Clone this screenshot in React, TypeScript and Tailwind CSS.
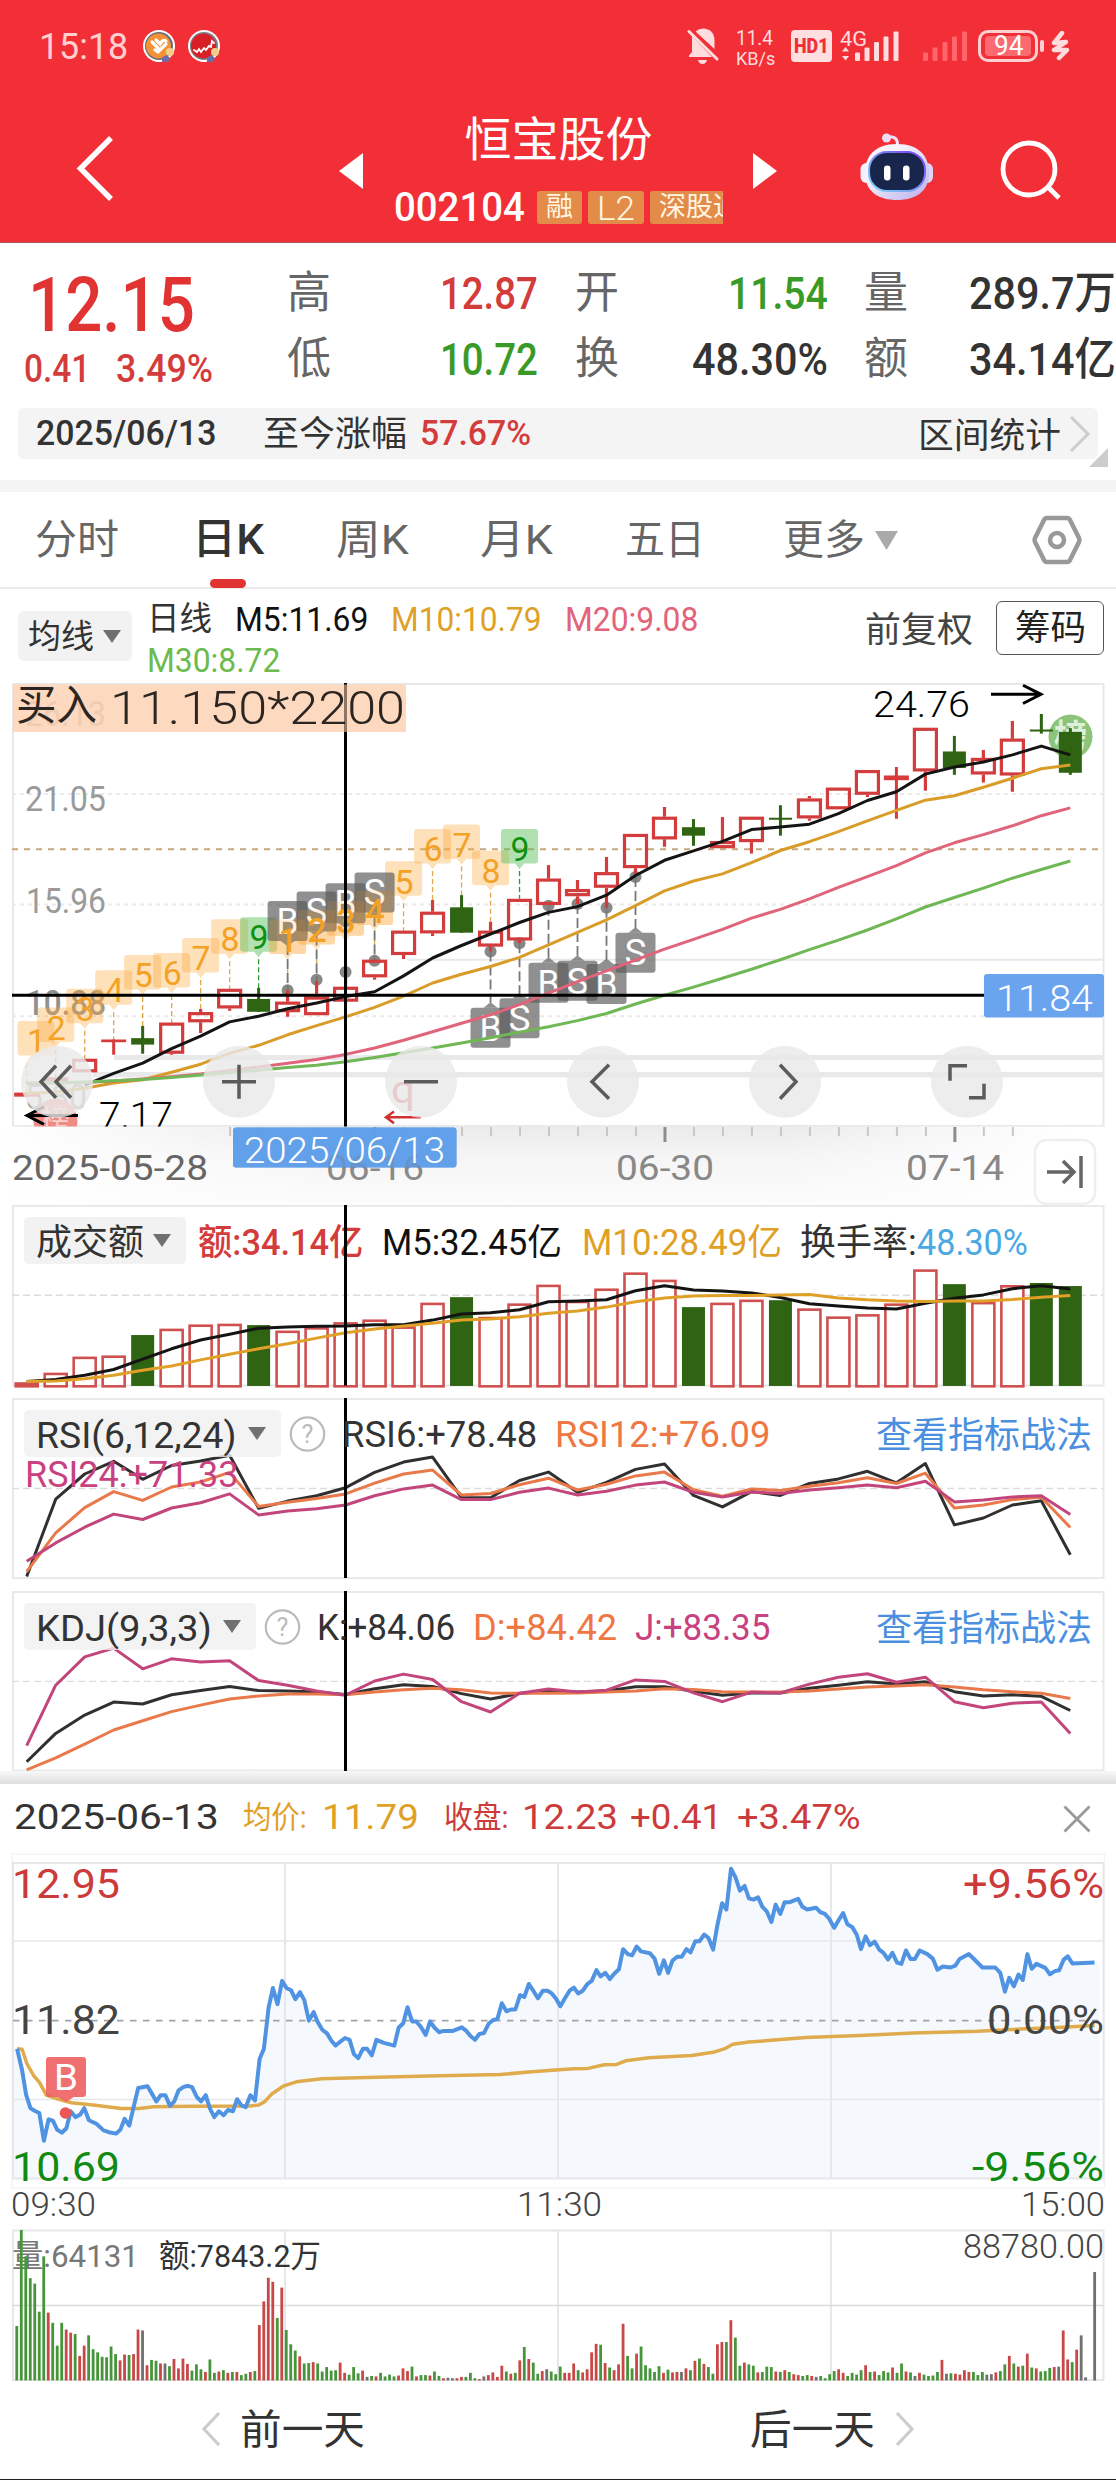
import { useLayoutEffect, useRef, type ReactNode } from "react";

const FONT = 'Roboto, "Noto Sans CJK SC", sans-serif';

/* Horizontally condenses or widens its text to fill the width given by its class. */
function Fit({ className, children }: { className: string; children: ReactNode }) {
  const outer = useRef<HTMLSpanElement>(null);
  const inner = useRef<HTMLSpanElement>(null);
  useLayoutEffect(() => {
    const o = outer.current;
    const n = inner.current;
    if (o && n && n.offsetWidth > 0) n.style.transform = `scaleX(${o.clientWidth / n.offsetWidth})`;
  });
  return (
    <span ref={outer} className={`block shrink-0 whitespace-nowrap leading-none ${className}`}>
      <span ref={inner} className="inline-block origin-left">
        {children}
      </span>
    </span>
  );
}

type LabelProps = {
  x: number;
  cy: number;
  size: number;
  w: number;
  fill: string;
  weight?: number;
  opacity?: number;
  children: string;
};

function Label({ x, cy, size, w, fill, weight = 400, opacity = 1, children }: LabelProps) {
  return (
    <text x={x} y={cy + size * 0.355} fontSize={size} fontWeight={weight} fill={fill} opacity={opacity} textLength={w} lengthAdjust="spacingAndGlyphs" fontFamily={FONT}>
      {children}
    </text>
  );
}

const cx = (i: number) => 26.7 + 28.99 * i;
const poly = (values: number[], y: (v: number) => number, from = 0) =>
  values.map((v, i) => `${cx(i).toFixed(1)},${y(v).toFixed(1)}`).slice(from).join(" ");

/* ---------- status bar and header ---------- */

function StatusBar() {
  return (
    <div className="flex h-[92px] items-center pl-[39px]">
      <Fit className="w-[89px] text-[37px] text-[#ffcfd1]">15:18</Fit>
      <svg width="32" height="32" viewBox="0 0 32 32" className="ml-[15px]">
        <circle cx="16" cy="16" r="16" fill="#fff" />
        <circle cx="16" cy="16" r="14" fill="#666c78" />
        <circle cx="15.5" cy="16" r="12.5" fill="#f29136" />
        <path d="M9 12 L15 18 M13 10 L17 14 Q20 9 23 11 M12 20 L15 22 L23 14" stroke="#fff" strokeWidth="3.2" fill="none" strokeLinecap="round" />
        <circle cx="27" cy="22" r="4" fill="#f1cf8b" />
        <path d="M19 28 q4 -5 8 0 l-2 4 h-6z" fill="#6b6ca8" />
      </svg>
      <svg width="32" height="32" viewBox="0 0 32 32" className="ml-[13px]">
        <circle cx="16" cy="16" r="16" fill="#fff" />
        <circle cx="16" cy="16" r="14" fill="#77808a" />
        <circle cx="15.5" cy="16" r="12.5" fill="#d81f26" />
        <path d="M6 20 l3 2 2 -3 2 3 3 -4 2 2 3 -4 2 1 1 -6 2 2" stroke="#fff" strokeWidth="1.8" fill="none" strokeLinecap="round" />
        <circle cx="27" cy="22" r="4" fill="#f1cf8b" />
        <path d="M19 28 q4 -5 8 0 l-2 4 h-6z" fill="#6b6ca8" />
      </svg>
      <svg width="32" height="38" viewBox="0 0 32 38" className="ml-[467px]" fill="#ffdcdd">
        <path d="M8.500 4.500 Q12 1.500 16 1.500 Q27 2 27.500 13 V22 Z" />
        <path d="M5 9 L25 30 H2 V28.500 L5 25 Z" />
        <path d="M2 4.500 L30 32" stroke="#ffdcdd" strokeWidth="3" strokeLinecap="round" />
        <path d="M11 33 H20 Q19 37 15.500 37 Q12 37 11 33" />
      </svg>
      <div className="ml-[17px] flex h-[36px] w-[40px] flex-col justify-between text-[#ffdcdd]">
        <Fit className="w-[37px] text-[21px] leading-[17px]">11.4</Fit>
        <Fit className="w-[39px] text-[19px] leading-[16px]">KB/s</Fit>
      </div>
      <div className="ml-[15px] flex h-[32px] w-[41px] items-center justify-center rounded-[4px] bg-[#ffdfe0]">
        <Fit className="w-[35px] text-[21px] font-black text-[#f03038]">HD1</Fit>
      </div>
      <div className="relative ml-[8px] h-[34px] w-[60px]">
        <Fit className="w-[27px] text-[21px] leading-[17px] text-[#ffdcdd]">4G</Fit>
        <svg viewBox="0 0 60 34" className="absolute inset-0 h-[34px] w-[60px]" fill="#ffdcdd">
          <path d="M2 22.500 L5.500 18 L9 22.500 Z M2 27 L5.500 31.500 L9 27 Z" />
          <rect x="15" y="23.500" width="5" height="8.500" rx="1" />
          <rect x="24.500" y="18.500" width="5" height="13.500" rx="1" />
          <rect x="34" y="13" width="5" height="19" rx="1" />
          <rect x="43.500" y="7.500" width="5" height="24.500" rx="1" />
          <rect x="53.500" y="2.500" width="5" height="29.500" rx="1" />
        </svg>
      </div>
      <svg width="46" height="34" viewBox="0 0 46 34" className="ml-[23px]" fill="#ff656b">
        <rect x="0" y="23.500" width="5" height="8.500" rx="1" />
        <rect x="9.500" y="18.500" width="5" height="13.500" rx="1" />
        <rect x="19.500" y="13" width="5" height="19" rx="1" />
        <rect x="29" y="7.500" width="5" height="24.500" rx="1" />
        <rect x="39" y="2.500" width="5" height="29.500" rx="1" />
      </svg>
      <div className="ml-[9px] flex h-[32px] w-[60px] items-center justify-center rounded-[10px] border-[3px] border-[#ffd0d2]">
        <div className="flex h-[20px] w-[46px] items-center justify-center rounded-[4px] bg-[#fb6a70]">
          <Fit className="w-[29px] text-[28px] text-white">94</Fit>
        </div>
      </div>
      <div className="ml-[2px] h-[12px] w-[4px] rounded-[2px] bg-[#ffd0d2]" />
      <svg width="19" height="30" viewBox="0 0 19 30" className="ml-[7px]">
        <path d="M11 2 L3 12 L15 11 L3 19 L16 19 L8 27" stroke="#ffdcdd" strokeWidth="4.500" fill="none" strokeLinejoin="round" strokeLinecap="round" />
      </svg>
    </div>
  );
}

function Robot() {
  return (
    <svg width="74" height="70" viewBox="0 0 74 70" className="ml-[83px]">
      <defs>
        <linearGradient id="shell" x1="0" y1="0" x2="1" y2="1">
          <stop offset="0.300" stopColor="#f8f3fd" />
          <stop offset="1" stopColor="#b8b0ea" />
        </linearGradient>
        <linearGradient id="rim" x1="0" y1="1" x2="1" y2="0">
          <stop offset="0" stopColor="#7fdcf5" />
          <stop offset="1" stopColor="#7a3cf0" />
        </linearGradient>
      </defs>
      <path d="M27 5 Q38 3 37.500 14" stroke="#efe2fa" strokeWidth="3" fill="none" />
      <circle cx="26.500" cy="6" r="4.500" fill="#f0ddf3" />
      <rect x="0.500" y="31" width="12" height="20" rx="6" fill="#f4effc" />
      <rect x="61" y="31" width="12" height="20" rx="6" fill="#dcd5f5" />
      <path d="M37 12 C60 12 69 25 69 41 C69 60 55 68 37 68 C19 68 5 60 5 41 C5 25 14 12 37 12Z" fill="url(#shell)" />
      <rect x="9" y="20" width="56" height="39" rx="18" fill="#18264c" stroke="url(#rim)" strokeWidth="2" />
      <rect x="24" y="33.500" width="6.500" height="15" rx="3.200" fill="#fff" />
      <rect x="43" y="33.500" width="6.500" height="15" rx="3.200" fill="#fff" />
    </svg>
  );
}

function Header() {
  return (
    <header className="h-[243px] border-b border-[#a85a60] bg-[#f22f37]">
      <StatusBar />
      <div className="flex h-[150px] items-center">
        <svg width="44" height="76" viewBox="0 0 44 76" className="ml-[72px] mt-[2px]">
          <path d="M39 8 L8.500 38.500 L39 69" stroke="#fff" strokeWidth="5.500" fill="none" />
        </svg>
        <svg width="24" height="36" viewBox="0 0 24 36" className="ml-[223px] mt-[7px]">
          <path d="M0 18 L24 0 V36Z" fill="#fff" />
        </svg>
        <div className="ml-[31px] flex h-[150px] w-[329px] flex-col items-center pt-[13px]">
          <div className="flex h-[69px] items-center text-white">
            <Fit className="w-[188px] text-[47px]">恒宝股份</Fit>
          </div>
          <div className="flex h-[69px] w-[329px] items-center overflow-hidden">
            <Fit className="w-[131px] text-[41px] font-medium text-white">002104</Fit>
            <div className="ml-[12px] flex h-[33px] w-[45px] shrink-0 items-center justify-center rounded-[3px] bg-[#e38c49] text-[#fff6e2]">
              <Fit className="w-[27px] text-[27px]">融</Fit>
            </div>
            <div className="ml-[6px] flex h-[33px] w-[56px] shrink-0 items-center justify-center rounded-[3px] bg-[#e38c49] text-[#fff6e2]">
              <Fit className="w-[38px] text-[34px] font-light">L2</Fit>
            </div>
            <div className="ml-[6px] flex h-[33px] w-[100px] shrink-0 items-center rounded-[3px] bg-[#e38c49] pl-[9px] text-[#fff6e2]">
              <Fit className="w-[81px] text-[27px]">深股通</Fit>
            </div>
          </div>
        </div>
        <svg width="24" height="36" viewBox="0 0 24 36" className="ml-[30px] mt-[7px]">
          <path d="M24 18 L0 0 V36Z" fill="#fff" />
        </svg>
        <Robot />
        <svg width="64" height="64" viewBox="0 0 64 64" className="ml-[66px] mt-[5px]">
          <circle cx="29" cy="31" r="26" fill="none" stroke="#fff" strokeWidth="4.800" />
          <path d="M48 49 L59 60" stroke="#fff" strokeWidth="4.800" />
        </svg>
      </div>
    </header>
  );
}

/* ---------- quote summary ---------- */

function Quote() {
  return (
    <section className="h-[237px]">
      <div className="flex h-[165px] pt-[17px]">
        <div className="flex w-[288px] flex-col">
          <div className="ml-[28px] flex h-[90px] items-center">
            <Fit className="w-[167px] text-[76px] font-medium text-[#e23333]">12.15</Fit>
          </div>
          <div className="ml-[24px] flex h-[38px] items-center gap-[26px] text-[39px] font-medium text-[#d43c3c]">
            <Fit className="w-[66px]">0.41</Fit>
            <Fit className="w-[97px]">3.49%</Fit>
          </div>
        </div>
        <div className="flex flex-col text-[45px] font-medium text-[#333]">
          <div className="flex h-[66px] items-center">
            <Fit className="w-[44px] text-[44px] font-normal text-[#666]">高</Fit>
            <Fit className="ml-[109px] w-[98px] text-[#d43c3c]">12.87</Fit>
            <Fit className="ml-[37px] w-[44px] text-[44px] font-normal text-[#666]">开</Fit>
            <Fit className="ml-[109px] w-[100px] text-[#3a9a28]">11.54</Fit>
            <Fit className="ml-[36px] w-[44px] text-[44px] font-normal text-[#666]">量</Fit>
            <Fit className="ml-[61px] w-[147px]">289.7万</Fit>
          </div>
          <div className="flex h-[66px] items-center">
            <Fit className="w-[44px] text-[44px] font-normal text-[#666]">低</Fit>
            <Fit className="ml-[109px] w-[98px] text-[#3a9a28]">10.72</Fit>
            <Fit className="ml-[37px] w-[44px] text-[44px] font-normal text-[#666]">换</Fit>
            <Fit className="ml-[73px] w-[136px]">48.30%</Fit>
            <Fit className="ml-[36px] w-[44px] text-[44px] font-normal text-[#666]">额</Fit>
            <Fit className="ml-[61px] w-[147px]">34.14亿</Fit>
          </div>
        </div>
      </div>
      <div className="relative ml-[18px] flex h-[51px] w-[1080px] items-center rounded-[6px] bg-[#f4f4f4] text-[35px] text-[#333]">
        <Fit className="ml-[18px] w-[180px] font-medium">2025/06/13</Fit>
        <Fit className="ml-[47px] mt-[2px] w-[144px]">至今涨幅</Fit>
        <Fit className="ml-[13px] w-[111px] font-medium text-[#d43c3c]">57.67%</Fit>
        <Fit className="ml-[387px] mt-[6px] w-[143px]">区间统计</Fit>
        <svg width="22" height="38" viewBox="0 0 22 38" className="ml-[8px]">
          <path d="M2 2 L19 19 L2 36" stroke="#ccc" strokeWidth="3" fill="none" />
        </svg>
        <svg width="19" height="19" viewBox="0 0 19 19" className="absolute right-[-10px] top-[40px]">
          <path d="M19 0 V19 H0Z" fill="#ccc" />
        </svg>
      </div>
    </section>
  );
}

function Tabs() {
  return (
    <nav className="flex h-[97px] items-start border-b-2 border-[#ebebeb] text-[41px] text-[#666]">
      <div className="ml-[35px] flex h-[96px] items-center"><Fit className="w-[84px]">分时</Fit></div>
      <div className="ml-[73px] flex h-[96px] flex-col items-center">
        <div className="flex h-[95px] shrink-0 items-center text-[#333]"><Fit className="w-[72px] text-[43px] font-medium">日K</Fit></div>
        <div className="mt-[-8px] h-[9px] w-[36px] shrink-0 rounded-full bg-[#e23333]" />
      </div>
      <div className="ml-[72px] flex h-[96px] items-center"><Fit className="w-[73px]">周K</Fit></div>
      <div className="ml-[71px] flex h-[96px] items-center"><Fit className="w-[73px]">月K</Fit></div>
      <div className="ml-[72px] flex h-[96px] items-center"><Fit className="w-[80px]">五日</Fit></div>
      <div className="ml-[78px] flex h-[96px] items-center"><Fit className="w-[82px]">更多</Fit>
        <svg width="24" height="19" viewBox="0 0 24 19" className="ml-[10px]"><path d="M0 0 H23 L11.500 19Z" fill="#aaa" /></svg>
      </div>
      <svg width="52" height="52" viewBox="0 0 52 52" className="ml-[132px] mt-[22px]" fill="none" stroke="#999" strokeWidth="4.500">
        <path d="M16 4 H36 Q38 4 39 6 L48 24 Q49 26 48 28 L39 46 Q38 48 36 48 H16 Q14 48 13 46 L4 28 Q3 26 4 24 L13 6 Q14 4 16 4Z" />
        <circle cx="26" cy="26" r="7" />
      </svg>
    </nav>
  );
}

const Caret = () => (
  <svg width="18" height="13" viewBox="0 0 18 13"><path d="M0 0 H18 L9 13Z" fill="#707070" /></svg>
);

function AverageRow() {
  return (
    <div className="flex h-[94px] items-start text-[34px]">
      <div className="ml-[18px] mt-[22px] flex h-[50px] w-[114px] items-center gap-[9px] rounded-[6px] bg-[#f2f2f2] pl-[10px] text-[#333]">
        <Fit className="w-[66px] text-[33px]">均线</Fit>
        <Caret />
      </div>
      <div className="ml-[15px] flex flex-col pt-[9px]">
        <div className="flex h-[41px] items-center">
          <Fit className="w-[65px] text-[33px] text-[#333]">日线</Fit>
          <Fit className="ml-[23px] w-[133px] text-[#111]">M5:11.69</Fit>
          <Fit className="ml-[23px] w-[151px] text-[#dfa026]">M10:10.79</Fit>
          <Fit className="ml-[23px] w-[133px] text-[#e2637a]">M20:9.08</Fit>
        </div>
        <div className="flex h-[41px] items-center">
          <Fit className="w-[133px] text-[#6cbb4c]">M30:8.72</Fit>
        </div>
      </div>
      <Fit className="ml-[167px] mt-[24px] w-[108px] text-[35px] text-[#444]">前复权</Fit>
      <div className="ml-[23px] mt-[12px] flex h-[54px] w-[108px] items-center justify-center rounded-[6px] border-[1.5px] border-[#555] text-[#222]">
        <Fit className="w-[71px] text-[35px]">筹码</Fit>
      </div>
    </div>
  );
}

/* ---------- candlestick chart ---------- */

const ky = (v: number) => 670 + v / 2.958;

/* [body top, body bottom, high, low, kind]; kind: r rising, g falling, f flat rising */
const CANDLES: [number, number, number, number, "r" | "g" | "f"][] = [
  [1250, 1262, 1250, 1262, "f"], [1205, 1220, 1205, 1220, "r"], [1150, 1190, 1150, 1190, "r"], [1093, 1101, 1093, 1138, "f"],
  [1089, 1108, 1053, 1135, "g"], [1043, 1135, 1043, 1138, "r"], [1012, 1042, 1003, 1074, "r"], [943, 1001, 943, 1008, "r"],
  [973, 1011, 940, 1011, "g"], [981, 1012, 947, 1026, "r"], [966, 1021, 920, 1021, "r"], [937, 981, 890, 981, "r"],
  [857, 909, 857, 916, "r"], [771, 843, 771, 855, "r"], [715, 779, 680, 787, "r"], [702, 777, 666, 777, "g"],
  [771, 818, 745, 833, "r"], [677, 800, 677, 808, "r"], [617, 695, 577, 695, "r"], [648, 669, 621, 692, "r"],
  [598, 644, 553, 703, "r"], [485, 586, 485, 603, "r"], [434, 501, 405, 523, "r"], [465, 490, 441, 520, "g"],
  [506, 527, 435, 527, "r"], [434, 509, 434, 543, "r"], [437, 443, 400, 490, "g"], [380, 439, 373, 446, "r"],
  [348, 412, 348, 412, "r"], [296, 369, 296, 376, "r"], [312, 326, 287, 440, "f"], [171, 300, 171, 357, "r"],
  [241, 290, 195, 310, "g"], [260, 309, 237, 333, "r"], [203, 312, 151, 360, "r"], [176, 182, 130, 188, "g"],
  [183, 304, 172, 310, "g"],
];

const MA5 = [1252, 1248, 1228, 1193, 1163, 1120, 1083, 1041, 1024, 1002, 985, 966, 952, 905, 852, 815, 781, 747, 717, 700, 666, 608, 563, 535, 507, 472, 464, 456, 425, 386, 360, 308, 287, 272, 251, 225, 251];
const MA10 = [1253, 1248, 1237, 1222, 1212, 1190, 1166, 1134, 1110, 1079, 1052, 1026, 998, 965, 926, 900, 877, 850, 813, 776, 739, 697, 653, 624, 603, 570, 534, 508, 478, 446, 415, 385, 372, 347, 320, 292, 281];
const MA20 = [1224, 1222, 1220, 1216, 1210, 1203, 1195, 1185, 1174, 1163, 1152, 1137, 1118, 1095, 1070, 1045, 1020, 990, 956, 922, 890, 858, 826, 797, 767, 734, 708, 677, 643, 611, 579, 541, 511, 487, 461, 431, 408];
const MA30 = [1222, 1221, 1219, 1215, 1211, 1205, 1198, 1191, 1184, 1176, 1169, 1159, 1146, 1132, 1118, 1103, 1088, 1071, 1055, 1037, 1016, 988, 962, 938, 912, 885, 857, 827, 799, 769, 736, 701, 673, 645, 616, 590, 565];

/* [index, top, text] */
const COUNTS: [number, number, string][] = [
  [0, 1038, "1"], [1, 998, "2"], [2, 943, "3"], [3, 888, "4"], [4, 843, "5"], [5, 837, "6"], [6, 793, "7"], [7, 737, "8"], [8, 731, "9"],
  [9, 738, "1"], [10, 710, "2"], [11, 684, "3"], [12, 652, "4"], [13, 566, "5"], [14, 470, "6"], [15, 457, "7"], [16, 535, "8"], [17, 470, "9"],
];

/* [index, badge top, dot, text, placed above the candle] */
const TRADES: [number, number, number, string, boolean][] = [
  [9, 683, 947, "B", true], [10, 655, 916, "S", true], [11, 631, 893, "B", true], [12, 599, 860, "S", true],
  [16, 999, 833, "B", false], [17, 971, 808, "S", false], [18, 866, 697, "B", false], [19, 860, 692, "S", false],
  [20, 870, 703, "B", false], [21, 777, 612, "S", false],
];

const BUTTON_ICONS = [
  "M14 -16 L-1 0 L14 16 M-1 -16 L-16 0 L-1 16",
  "M-17 0 H17 M0 -17 V17",
  "M-17 0 H17",
  "M6 -17 L-11 0 L6 17",
  "M-5 -17 L11 0 L-5 17",
  "M-17 -1 V-16 H0 M17 2 V16 H2",
];

function CandleChart() {
  return (
    <svg width="1116" height="522" viewBox="0 683 1116 522" className="block">
      <defs>
        <linearGradient id="axisShade" x1="0" y1="0" x2="0" y2="1">
          <stop offset="0" stopColor="#ebebeb" />
          <stop offset="0.400" stopColor="#f5f5f5" />
          <stop offset="1" stopColor="#fcfcfc" />
        </linearGradient>
        <linearGradient id="axisFade" x1="0" y1="0" x2="1" y2="0">
          <stop offset="0" stopColor="#fff" />
          <stop offset="0.300" stopColor="#fff" stopOpacity="0" />
          <stop offset="0.700" stopColor="#fff" stopOpacity="0" />
          <stop offset="0.960" stopColor="#fff" />
        </linearGradient>
        <clipPath id="plot"><rect x="12" y="683" width="1093" height="443.500" /></clipPath>
      </defs>
      <rect x="0" y="1126" width="1116" height="79" fill="url(#axisShade)" />
      <rect x="0" y="1126" width="1116" height="79" fill="url(#axisFade)" />
      <g clipPath="url(#plot)">
        <rect x="13" y="684" width="1090.500" height="442" fill="none" stroke="#e8e8e8" strokeWidth="2" />
        {[367, 694, 1024].map((v) => (
          <path key={v} d={`M12 ${ky(v)} H1103`} stroke="#eaeaea" strokeWidth="2" strokeDasharray="4 4" />
        ))}
        <path d={`M407 ${ky(857)} H1103`} stroke="#e8e8e8" strokeWidth="2" />
        <path d={`M12 ${ky(530)} H1103`} stroke="#c7a87c" strokeWidth="2" strokeDasharray="6 6" />
        <path d={`M114 ${ky(1146)} H1104`} stroke="#e9e9e9" strokeWidth="5" />
        <path d={`M93 ${ky(1197)} H1104`} stroke="#e9e9e9" strokeWidth="5.500" />

        <Label x={25} cy={ky(129)} size={35} w={81} fill="#9a9a9a">26.13</Label>
        <Label x={25} cy={ky(379)} size={35} w={81} fill="#9a9a9a">21.05</Label>
        <Label x={26} cy={ky(681)} size={35} w={80} fill="#9a9a9a">15.96</Label>
        <Label x={26} cy={ky(984)} size={35} w={80} fill="#909090" weight={500}>10.88</Label>
        <Label x={25} cy={ky(1262)} size={35} w={62} fill="#9a9a9a">5.80</Label>

        {COUNTS.map(([i, top, text]) => {
          const ok = text === "9";
          const x = i === 0 ? 36 : cx(i);
          const t = ky(top);
          return (
            <g key={i}>
              <path d={`M${cx(i)} ${t + 42} V${Math.max(t + 42, ky(CANDLES[i][2]))}`} stroke={ok ? "#2c9a3a" : "#dfa64a"} strokeWidth="1.300" strokeDasharray="5 3" />
              <path
                d={`M${x - 15.500} ${t} h31 q3 0 3 3 v28.500 q0 3 -3 3 h-11 l${cx(i) - x - 4.500} 5.500 l${x - cx(i) - 4.500} -5.500 h-11 q-3 0 -3 -3 v-28.500 q0 -3 3 -3z`}
                fill={ok ? "#5cbf5c" : "#fba83c"}
                fillOpacity={ok ? 0.48 : 0.36}
              />
              <Label x={x - 9} cy={t + 20.5} size={33} w={19} fill={ok ? "#0f9010" : "#f3a226"}>{text}</Label>
            </g>
          );
        })}

        {TRADES.map(([i, top, dot, text, above]) => {
          const t = ky(top);
          const x = cx(i);
          const d = ky(dot);
          return (
            <g key={i}>
              <circle cx={x} cy={d} r="6" fill="#555" fillOpacity="0.700" />
              <path d={above ? `M${x} ${t + 44} V${d}` : `M${x} ${d} V${t - 5}`} stroke="#777" strokeWidth="1.800" strokeDasharray="10 4" />
              <rect x={x - 20} y={t} width="40" height="40" rx="3" fill="#5c5c5c" fillOpacity="0.680" />
              <path d={above ? `M${x - 7} ${t + 40} h14 l-7 5z` : `M${x - 7} ${t} h14 l-7 -5.500z`} fill="#5c5c5c" fillOpacity="0.680" />
              <Label x={x - 11} cy={t + 20} size={36} w={22} fill="#fff">{text}</Label>
            </g>
          );
        })}
        {COUNTS.slice(9, 13).map(([i, top]) => (
          <rect key={i} x={cx(i) - 18.5} y={ky(top)} width="37" height="34.500" rx="3" fill="#fba83c" fillOpacity="0.160" />
        ))}
        {COUNTS.slice(9, 13).map(([i, top, text]) => (
          <Label key={i} x={cx(i) - 9} cy={ky(top) + 20.5} size={33} w={19} fill="#f3a226" weight={500}>{text}</Label>
        ))}

        <circle cx="1070.500" cy={ky(197)} r="22" fill="#8cc47a" />
        <Label x={1054} cy={ky(195)} size={33} w={33} fill="#dff0da" weight={700}>榜</Label>
        <circle cx="55.500" cy={ky(1333)} r="22" fill="#f08a84" />
        <Label x={41} cy={ky(1333)} size={29} w={29} fill="#fff" opacity={0.6}>榜</Label>

        {CANDLES.map(([top, bottom, high, low, kind], i) => {
          const x = cx(i);
          const t = ky(top);
          const b = ky(bottom);
          if (kind === "g")
            return (
              <g key={i} fill="#2f6412">
                <rect x={x - 11.500} y={t} width="23" height={b - t} />
                <rect x={x - 1.500} y={ky(high)} width="3" height={ky(low) - ky(high)} />
              </g>
            );
          if (kind === "f")
            return (
              <g key={i} fill="#d63a3a">
                <rect x={x - 12.500} y={t} width="25" height={b - t} />
                <rect x={x - 1.500} y={ky(high)} width="3" height={ky(low) - ky(high)} />
              </g>
            );
          return (
            <g key={i} fill="none" stroke="#d33c3c" strokeWidth="3.200">
              <rect x={x - 11} y={t + 1.500} width="22" height={Math.max(1, b - t - 3)} />
              <path d={`M${x} ${ky(high)} V${t} M${x} ${b} V${ky(low)}`} />
            </g>
          );
        })}

        <g fill="none" strokeWidth="3" strokeLinejoin="round">
          <polyline points={poly(MA5, ky, 2)} stroke="#141414" />
          <polyline points={poly(MA10, ky)} stroke="#d99c28" />
          <polyline points={poly(MA20, ky)} stroke="#e0647a" />
          <polyline points={poly(MA30, ky)} stroke="#70b756" />
        </g>

        <g stroke="#000" strokeWidth="3" fill="none">
          <path d={`M991 ${ky(72)} H1041 M1023 ${ky(45)} L1041 ${ky(72)} L1023 ${ky(99)}`} />
          <path d={`M78 ${ky(1318)} H27 M44 ${ky(1292)} L27 ${ky(1318)} L44 ${ky(1344)}`} />
        </g>
        <Label x={873} cy={ky(100)} size={36} w={97} fill="#000" weight={300}>24.76</Label>
        <Label x={99} cy={ky(1317)} size={36} w={74} fill="#000" weight={300}>7.17</Label>
        <Label x={391} cy={ky(1240)} size={38} w={24} fill="#dd4a4a">q</Label>
        <path d={`M421 ${ky(1323)} H386 M394 ${ky(1306)} L386 ${ky(1323)} L394 ${ky(1341)}`} stroke="#d43030" strokeWidth="2.500" fill="none" />

        <path d={`M12 ${ky(962)} H1103 M345.500 683 V1127`} stroke="#000" strokeWidth="3" />
        <rect x="13" y="684.500" width="393" height="47.500" fill="#fdd3b4" fillOpacity="0.860" />
        <Label x={16} cy={ky(105)} size={42} w={81} fill="#2b2622">买入</Label>
        <Label x={110} cy={ky(109)} size={47} w={295} fill="#2b2622" weight={300}>11.150*2200</Label>
        <path d="M345.500 684 V732" stroke="#000" strokeOpacity="0.350" strokeWidth="3" />
      </g>

      {BUTTON_ICONS.map((d, k) => (
        <g key={d} transform={`translate(${57 + 182 * k} ${ky(1218)})`}>
          <circle r="36" fill="#e9e9e9" fillOpacity="0.820" />
          <path d={d} fill="none" stroke="#5b5b5b" strokeWidth="3.500" />
        </g>
      ))}

      {Array.from({ length: 28 }, (_, k) => k + 7).map((i) => {
        const major = i === 12 || i === 22 || i === 32;
        return <path key={i} d={`M${cx(i) + 0.5} 1127 v${major ? 15 : 9}`} stroke={major ? "#8c8c8c" : "#c8c8c8"} strokeWidth={major ? 3 : 2} />;
      })}
      <Label x={12} cy={1167.6} size={35} w={196} fill="#666">2025-05-28</Label>
      <rect x="233" y="1127.500" width="223.500" height="40" rx="3" fill="#5f9eea" fillOpacity="0.940" />
      <Label x={326} cy={1167.6} size={35} w={98} fill="#777" opacity={0.85}>06-16</Label>
      <Label x={616} cy={1167.6} size={35} w={98} fill="#888">06-30</Label>
      <Label x={906} cy={1167.6} size={35} w={98} fill="#888">07-14</Label>
      <rect x="233" y="1127.500" width="223.500" height="40" rx="3" fill="#5f9eea" fillOpacity="0.700" />
      <Label x={244} cy={1150} size={36} w={201} fill="#fff" weight={300}>2025/06/13</Label>
      <rect x="984" y="974" width="120" height="43.500" rx="3" fill="#6aa4ee" />
      <Label x={996} cy={998} size={36} w={97} fill="#fff" weight={300}>11.84</Label>

      <rect x="1035" y="1140" width="60" height="64" rx="12" fill="#fff" stroke="#efefef" strokeWidth="2.500" />
      <path d="M1047 1172 H1074 M1063 1161 L1074 1172 L1063 1183 M1081 1156 V1188" stroke="#666" strokeWidth="3.500" fill="none" />
    </svg>
  );
}

/* ---------- indicator panels ---------- */

const iy = (v: number) => 1190 + v / 2.613;

const VOLUME: [number, boolean][] = [
  [503, true], [478, true], [436, true], [433, true], [379, false], [363, true], [352, true], [350, true], [353, false], [368, true],
  [359, true], [346, true], [339, true], [357, true], [295, true], [280, false], [332, true], [297, true], [248, true], [290, true],
  [258, true], [216, true], [235, true], [306, false], [295, true], [287, true], [288, false], [310, true], [331, true], [325, true],
  [297, true], [208, true], [246, false], [293, true], [249, true], [243, false], [251, false],
];
const VOL_M5 = [500, 495, 484, 469, 442, 415, 392, 377, 361, 358, 356, 355, 352, 352, 340, 324, 321, 313, 292, 290, 287, 263, 250, 261, 264, 269, 281, 297, 303, 308, 311, 296, 283, 274, 258, 250, 259];
const VOL_M10 = [500, 499, 493, 484, 471, 460, 444, 429, 415, 402, 387, 373, 363, 355, 348, 340, 337, 331, 322, 316, 306, 292, 282, 277, 276, 276, 274, 273, 282, 287, 290, 291, 290, 290, 286, 280, 276];
const RSI6 = [1010, 808, 742, 709, 756, 720, 708, 693, 832, 813, 799, 778, 738, 711, 698, 804, 804, 759, 737, 790, 764, 730, 716, 798, 828, 788, 798, 767, 755, 735, 765, 715, 875, 857, 823, 812, 953];
const RSI12 = [997, 896, 830, 788, 811, 776, 763, 738, 827, 816, 806, 794, 766, 742, 732, 797, 793, 770, 753, 784, 769, 747, 737, 783, 800, 781, 785, 774, 765, 752, 767, 740, 831, 823, 809, 803, 882];
const RSI24 = [970, 922, 881, 847, 861, 831, 817, 794, 849, 839, 833, 823, 799, 781, 771, 809, 809, 790, 779, 797, 787, 771, 763, 790, 802, 789, 793, 784, 778, 771, 778, 761, 815, 810, 802, 799, 848];
const KDJ_K = [1494, 1420, 1372, 1338, 1343, 1319, 1308, 1297, 1308, 1309, 1312, 1318, 1303, 1293, 1297, 1316, 1330, 1316, 1310, 1312, 1309, 1298, 1298, 1310, 1320, 1314, 1314, 1302, 1294, 1285, 1291, 1285, 1311, 1322, 1319, 1323, 1360];
const KDJ_D = [1515, 1484, 1448, 1411, 1387, 1363, 1346, 1330, 1322, 1317, 1317, 1319, 1312, 1306, 1302, 1306, 1314, 1315, 1315, 1314, 1312, 1309, 1303, 1305, 1311, 1312, 1312, 1309, 1304, 1299, 1296, 1293, 1299, 1306, 1311, 1315, 1329];
const KDJ_J = [1452, 1294, 1220, 1197, 1251, 1225, 1233, 1230, 1282, 1294, 1309, 1320, 1283, 1265, 1279, 1337, 1364, 1315, 1304, 1312, 1307, 1280, 1284, 1314, 1337, 1312, 1314, 1291, 1273, 1264, 1286, 1273, 1337, 1353, 1341, 1338, 1420];

function Frame({ top, bottom, mid }: { top: number; bottom: number; mid: number }) {
  return (
    <>
      <rect x="13" y={top} width="1090.500" height={bottom - top} fill="none" stroke="#e9e9e9" strokeWidth="2" />
      <path d={`M12 ${mid} H1103`} stroke="#ddd" strokeWidth="1.300" strokeDasharray="7 4" />
    </>
  );
}

const Hair = ({ top, bottom }: { top: number; bottom: number }) => <path d={`M345.500 ${top} V${bottom}`} stroke="#000" strokeWidth="3" />;

const Help = () => (
  <svg width="37" height="36" viewBox="0 0 37 36" className="shrink-0">
    <circle cx="18.500" cy="18" r="16.700" fill="none" stroke="#bbb" strokeWidth="2.200" />
    <text x="18.500" y="27" fontSize="25" textAnchor="middle" fill="#bbb" fontFamily={FONT}>?</text>
  </svg>
);

function VolumePanel() {
  return (
    <section className="relative h-[193px]">
      <svg width="1116" height="193" viewBox="0 1205 1116 193" className="absolute inset-0">
        <Frame top={1206} bottom={1385.500} mid={iy(275)} />
        {VOLUME.map(([v, up], i) =>
          up ? (
            <rect key={i} x={cx(i) - 11} y={iy(v) + 1} width="22" height={iy(513) - iy(v) - 1} fill={i === 0 ? "#e23d3d" : "#fff"} stroke="#d05050" strokeWidth="2.600" />
          ) : (
            <rect key={i} x={cx(i) - 11.500} y={iy(v)} width="23" height={iy(512) - iy(v)} fill="#2f6412" />
          ),
        )}
        <g fill="none" strokeWidth="3" strokeLinejoin="round">
          <polyline points={poly(VOL_M5, iy)} stroke="#141414" />
          <polyline points={poly(VOL_M10, iy)} stroke="#e0a028" />
        </g>
      </svg>
      <div className="relative flex items-center pl-[24px] pt-[12px] text-[36px] text-[#333]">
        <div className="flex h-[47px] w-[162px] items-center gap-[9px] rounded-[5px] bg-[#f2f2f2] pl-[12px]">
          <Fit className="mt-[5px] w-[108px] text-[36px]">成交额</Fit>
          <Caret />
        </div>
        <Fit className="ml-[12px] mt-[4px] w-[165px] font-medium text-[#d43c3c]">额:34.14亿</Fit>
        <Fit className="ml-[19px] mt-[4px] w-[180px] text-[#111]">M5:32.45亿</Fit>
        <Fit className="ml-[20px] mt-[4px] w-[200px] text-[#dfa026]">M10:28.49亿</Fit>
        <Fit className="ml-[18px] mt-[4px] w-[117px]">换手率:</Fit>
        <Fit className="mt-[4px] w-[111px] text-[#4aa9e2]">48.30%</Fit>
      </div>
      <svg width="1116" height="193" viewBox="0 1205 1116 193" className="pointer-events-none absolute inset-0">
        <Hair top={1205} bottom={1385.500} />
      </svg>
    </section>
  );
}

function RsiPanel() {
  return (
    <section className="relative h-[193px]">
      <svg width="1116" height="193" viewBox="0 1398 1116 193" className="absolute inset-0">
        <Frame top={1399} bottom={1578} mid={iy(780)} />
        <g fill="none" strokeWidth="3" strokeLinejoin="round">
          <polyline points={poly(RSI6, iy)} stroke="#303030" />
          <polyline points={poly(RSI12, iy)} stroke="#e9794a" />
          <polyline points={poly(RSI24, iy)} stroke="#c2457c" />
        </g>
        <Hair top={1398} bottom={1578} />
      </svg>
      <div className="relative flex items-center pl-[24px] pt-[12px] text-[36px] text-[#333]">
        <div className="flex h-[47px] w-[257px] items-center gap-[11px] rounded-[5px] bg-[#f0f0f0]/80 pl-[12px]">
          <Fit className="mt-[4px] w-[201px]">RSI(6,12,24)</Fit>
          <Caret />
        </div>
        <div className="ml-[8px] flex"><Help /></div>
        <Fit className="ml-[16px] mt-[3px] w-[195px]">RSI6:+78.48</Fit>
        <Fit className="ml-[18px] mt-[3px] w-[215px] text-[#ee7744]">RSI12:+76.09</Fit>
        <Fit className="ml-[106px] mt-[5px] w-[216px] text-[36px] text-[#4a8fe0]">查看指标战法</Fit>
      </div>
      <Fit className="relative ml-[25px] w-[213px] text-[36px] text-[#c8427f]">RSI24:+71.33</Fit>
    </section>
  );
}

function KdjPanel() {
  return (
    <section className="relative h-[180px]">
      <svg width="1116" height="180" viewBox="0 1591 1116 180" className="absolute inset-0">
        <Frame top={1592} bottom={1770.500} mid={iy(1284)} />
        <g fill="none" strokeWidth="3" strokeLinejoin="round">
          <polyline points={poly(KDJ_K, iy)} stroke="#303030" />
          <polyline points={poly(KDJ_D, iy)} stroke="#e9794a" />
          <polyline points={poly(KDJ_J, iy)} stroke="#c2457c" />
        </g>
        <Hair top={1591} bottom={1771} />
      </svg>
      <div className="relative flex items-center pl-[24px] pt-[12px] text-[36px] text-[#333]">
        <div className="flex h-[47px] w-[232px] items-center gap-[11px] rounded-[5px] bg-[#f0f0f0]/80 pl-[12px]">
          <Fit className="mt-[4px] w-[176px]">KDJ(9,3,3)</Fit>
          <Caret />
        </div>
        <div className="ml-[8px] flex"><Help /></div>
        <Fit className="ml-[16px] mt-[3px] w-[138px]">K:+84.06</Fit>
        <Fit className="ml-[18px] mt-[3px] w-[144px] text-[#ee7744]">D:+84.42</Fit>
        <Fit className="ml-[18px] mt-[3px] w-[135px] text-[#c8427f]">J:+83.35</Fit>
        <Fit className="ml-[106px] mt-[5px] w-[216px] text-[36px] text-[#4a8fe0]">查看指标战法</Fit>
      </div>
    </section>
  );
}

/* ---------- intraday sheet ---------- */

const sx = (u: number) => u / 2.8;
const sy = (v: number) => 1780 + v / 2.24;

const PRICE_AM: [number, number][] = [
  [48, 602], [62, 650], [73, 705], [85, 735], [97, 741], [110, 746], [123, 808], [136, 760], [148, 763], [160, 783], [173, 790], [186, 780], [198, 742], [211, 755], [224, 750], [236, 735], [249, 762], [270, 770], [290, 785], [305, 789], [325, 792], [337, 783], [349, 759], [362, 774], [375, 730], [387, 690], [413, 686], [425, 702], [438, 720], [450, 706], [463, 706], [476, 730], [488, 720], [500, 695], [513, 688], [526, 685], [538, 688], [551, 710], [563, 720], [576, 706], [588, 736], [600, 755], [613, 742], [626, 751], [638, 739], [652, 742], [664, 715], [676, 729], [688, 733], [701, 706], [714, 718], [727, 625], [739, 602], [752, 510], [764, 466], [777, 502], [790, 450], [802, 466], [815, 471], [827, 491], [840, 475], [852, 493], [865, 539], [878, 520], [890, 543], [903, 560], [915, 567], [928, 584], [940, 595], [953, 586], [966, 578], [979, 582], [991, 614], [1003, 623], [1016, 602], [1028, 602], [1041, 617], [1054, 582], [1075, 589], [1104, 595], [1116, 555], [1129, 545], [1141, 509], [1154, 541], [1166, 541], [1179, 554], [1192, 571], [1204, 541], [1217, 555], [1230, 565], [1242, 562], [1268, 562], [1293, 554], [1306, 562], [1318, 574], [1330, 582], [1342, 569], [1355, 567], [1368, 546], [1380, 538], [1393, 535], [1405, 500], [1418, 518], [1430, 514], [1443, 514], [1456, 482], [1468, 486], [1481, 457], [1494, 473], [1506, 489], [1520, 472], [1533, 472], [1545, 478], [1557, 490],
];
const PRICE_PM: [number, number][] = [
  [12, 507], [25, 489], [38, 472], [50, 465], [62, 478], [75, 472], [88, 457], [100, 450], [113, 426], [125, 440], [138, 432], [151, 446], [163, 434], [176, 424], [188, 379], [201, 390], [213, 393], [226, 373], [238, 384], [263, 388], [276, 400], [289, 434], [302, 404], [314, 432], [326, 405], [339, 396], [352, 396], [365, 379], [377, 386], [390, 361], [402, 361], [415, 346], [427, 354], [440, 380], [452, 325], [465, 276], [477, 290], [490, 199], [502, 217], [515, 248], [528, 237], [540, 265], [553, 268], [566, 263], [578, 284], [590, 294], [603, 318], [615, 279], [628, 300], [640, 274], [653, 274], [678, 266], [690, 284], [703, 290], [728, 286], [740, 296], [753, 300], [765, 311], [779, 331], [792, 313], [804, 298], [816, 323], [829, 329], [842, 346], [854, 379], [867, 350], [879, 370], [892, 362], [905, 380], [917, 387], [930, 402], [942, 387], [955, 409], [967, 412], [980, 382], [993, 401], [1005, 401], [1018, 382], [1040, 390], [1055, 400], [1068, 425], [1083, 418], [1105, 420], [1118, 416], [1130, 401], [1156, 390], [1170, 401], [1194, 420], [1230, 420], [1244, 432], [1257, 474], [1269, 443], [1282, 462], [1295, 436], [1307, 448], [1320, 390], [1332, 423], [1345, 412], [1370, 421], [1383, 435], [1397, 428], [1409, 426], [1421, 403], [1433, 395], [1446, 411], [1508, 409],
];
const AVG_AM: [number, number][] = [
  [48, 602], [62, 603], [75, 635], [95, 663], [110, 677], [130, 706], [160, 714], [200, 723], [260, 728], [340, 736], [390, 736], [430, 732], [540, 731], [700, 730], [725, 728], [742, 720], [760, 704], [795, 685], [830, 676], [900, 669], [1000, 667], [1200, 663], [1400, 660], [1480, 654],
];
const AVG_PM: [number, number][] = [
  [8, 649], [50, 647], [90, 646], [135, 638], [170, 637], [195, 629], [260, 622], [380, 617], [440, 610], [475, 601], [495, 592], [540, 587], [620, 582], [700, 577], [850, 572], [1000, 567], [1180, 563], [1300, 558], [1420, 554], [1508, 550],
];

const track = (am: [number, number][], pm: [number, number][]) =>
  [...am, ...pm.map(([x, y]) => [x + 1556.8, y] as [number, number])].map(([x, y]) => `${sx(x).toFixed(1)},${sy(y).toFixed(1)}`).join(" ");

/* One entry per minute: r buy, g sell, k neutral, then the bar top */
const MINUTES =
  "g1223 g1008 g1067 g1116 g1128 g1191 g1067 r1193 g1216 g1267 g1216 r1231 r1238 g1241 r1290 r1267 g1244 g1275 g1282 g1292 g1293 g1269 g1286 r1300 r1287 g1288 r1286 r1231 k1233 r1311 g1299 g1301 r1307 k1307 g1313 r1297 r1318 r1296 r1308 g1323 g1309 g1320 r1326 g1298 g1328 r1325 g1322 r1328 g1326 r1326 g1333 g1330 r1326 g1324 r1221 r1168 r1115 r1124 g1205 r1137 g1232 g1264 g1278 r1291 g1307 g1306 r1304 g1307 g1325 g1315 g1323 g1322 r1305 r1328 g1332 g1315 g1329 r1323 k1337 g1335 r1336 g1328 g1336 g1332 g1336 r1334 r1318 r1324 g1314 r1336 g1333 g1333 r1334 g1325 g1335 r1340 k1339 k1340 r1340 r1337 g1337 g1328 g1340 r1342 k1336 r1333 r1327 r1337 r1312 g1325 r1330 g1328 r1300 g1270 r1297 g1305 g1330 r1324 k1320 g1325 g1331 g1314 r1328 r1328 r1307 g1322 r1327 r1320 r1282 r1263 g1265 r1306 g1316 r1322 r1309 r1218 g1290 g1318 r1285 g1269 g1311 g1318 g1326 g1313 r1328 g1321 r1327 r1326 k1326 r1318 g1322 r1301 g1296 r1308 g1315 g1330 r1264 r1259 g1259 r1210 g1249 g1312 r1305 g1309 g1312 r1327 g1326 g1314 g1315 r1325 g1326 r1322 g1326 r1331 r1333 g1335 g1333 r1335 k1337 g1335 g1340 g1331 g1324 r1320 r1328 g1335 g1328 g1332 g1322 r1311 g1326 r1325 g1333 g1324 g1327 r1316 g1328 g1307 r1325 g1327 k1335 r1328 g1332 g1335 g1334 g1326 r1299 k1330 g1329 r1330 r1332 r1322 r1326 g1326 g1333 g1326 k1332 k1331 r1327 g1324 g1309 r1290 g1307 r1314 g1312 r1285 g1316 r1318 g1325 g1324 g1317 r1315 k1314 r1233 r1298 g1304 r1276 k1244 k1338 k1345 k1102".split(" ");
const MINUTE_FILL: Record<string, string> = { r: "#c84848", g: "#46953a", k: "#707070" };

function IntradayCharts() {
  return (
    <svg width="1116" height="536" viewBox="0 1850 1116 536" className="block">
      <rect x="12" y="1854" width="1092.500" height="334" fill="none" stroke="#f5f5f5" strokeWidth="1.500" />
      <polygon points={`13,${sy(602)} ${track(PRICE_AM, PRICE_PM)} ${sx(3079)},${sy(411)} ${sx(3079)},2178 13,2178`} fill="#f5f9fe" />
      <g fill="none" stroke="#e6e7ea" strokeWidth="2">
        <rect x="13" y="1863" width="1090.500" height="315.500" />
        <path d="M285 1863 V2178 M558 1863 V2178 M831 1863 V2178" />
        <path d="M13 1941 H1103 M13 2099.500 H1103" strokeWidth="1.300" />
        <rect x="13" y="2230.500" width="1090.500" height="149.500" />
        <path d="M285 2231 V2380 M558 2231 V2380 M831 2231 V2380" />
        <path d="M13 2305.500 H1103" stroke="#dcdcdc" strokeWidth="1.300" />
      </g>
      <path d="M13 2020.600 H1103" stroke="#a0a4aa" strokeWidth="1.600" strokeDasharray="6.500 6.500" />
      <polyline points={track(AVG_AM, AVG_PM)} fill="none" stroke="#dfab4c" strokeWidth="3.500" strokeLinejoin="round" />
      <polyline points={track(PRICE_AM, PRICE_PM)} fill="none" stroke="#4f93e2" strokeWidth="4" strokeLinejoin="round" />

      <path d="M49 2057 h34 q3 0 3 3 v34 q0 3 -3 3 h-9 l-8 5 l-8 -5 h-9 q-3 0 -3 -3 v-34 q0 -3 3 -3z" fill="#ee6062" fillOpacity="0.900" />
      <Label x={54} cy={2077} size={36} w={24} fill="#fff">B</Label>
      <circle cx="65.500" cy="2113" r="5.800" fill="#ee5555" />

      <Label x={12} cy={1883} size={41} w={108} fill="#cc3a3a">12.95</Label>
      <Label x={12} cy={2019.5} size={41} w={108} fill="#444">11.82</Label>
      <Label x={12} cy={2166} size={41} w={108} fill="#108a10">10.69</Label>
      <Label x={963} cy={1883} size={41} w={141} fill="#cc3a3a">+9.56%</Label>
      <Label x={987} cy={2019.5} size={41} w={117} fill="#444">0.00%</Label>
      <Label x={972} cy={2166} size={41} w={132} fill="#108a10">-9.56%</Label>
      <Label x={11} cy={2204.6} size={33} w={85} fill="#444" weight={300}>09:30</Label>
      <Label x={517} cy={2204.6} size={33} w={85} fill="#444" weight={300}>11:30</Label>
      <Label x={1021} cy={2204.6} size={33} w={84} fill="#444" weight={300}>15:00</Label>

      <Label x={12} cy={2255.5} size={32} w={127} fill="#777">量:64131</Label>
      <Label x={159} cy={2255.5} size={32} w={162} fill="#333">额:7843.2万</Label>
      <Label x={963} cy={2246.5} size={33} w={141} fill="#444" weight={300}>88780.00</Label>
      {MINUTES.map((m, k) => {
        const top = sy(Number(m.slice(1)));
        return <rect key={k} x={sx(47 + 12.575 * k) - 1.4} y={top} width="2.800" height={2380.500 - top} fill={MINUTE_FILL[m[0]]} />;
      })}
    </svg>
  );
}

function IntradaySheet() {
  return (
    <section className="bg-white text-[#333]">
      <div className="flex h-[66px] items-center text-[35px] font-normal">
        <Fit className="ml-[14px] w-[205px]">2025-06-13</Fit>
        <Fit className="ml-[24px] w-[64px] text-[31px] text-[#dfa026]">均价:</Fit>
        <Fit className="ml-[15px] w-[97px] text-[#dfa026]">11.79</Fit>
        <Fit className="ml-[25px] w-[65px] text-[31px] text-[#cc3a3a]">收盘:</Fit>
        <Fit className="ml-[13px] w-[96px] text-[#cc3a3a]">12.23</Fit>
        <Fit className="ml-[12px] w-[92px] text-[#cc3a3a]">+0.41</Fit>
        <Fit className="ml-[15px] w-[124px] text-[#cc3a3a]">+3.47%</Fit>
        <svg width="28" height="28" viewBox="0 0 28 28" className="ml-[202px] mt-[4px]">
          <path d="M1.500 1.500 L26.500 26.500 M26.500 1.500 L1.500 26.500" stroke="#999" strokeWidth="2.800" />
        </svg>
      </div>
      <IntradayCharts />
      <div className="flex h-[94px] items-center border-b border-[#222] pb-[7px] text-[41px]">
        <svg width="20" height="38" viewBox="0 0 20 38" className="ml-[201px]">
          <path d="M18 3 L3 19 L18 35" stroke="#ccc" strokeWidth="3.200" fill="none" />
        </svg>
        <Fit className="ml-[19px] mt-[2px] w-[125px]">前一天</Fit>
        <Fit className="ml-[385px] mt-[2px] w-[125px]">后一天</Fit>
        <svg width="20" height="38" viewBox="0 0 20 38" className="ml-[20px]">
          <path d="M2 3 L17 19 L2 35" stroke="#ccc" strokeWidth="3.200" fill="none" />
        </svg>
      </div>
    </section>
  );
}

export default function App() {
  return (
    <main className="h-[2480px] w-[1116px] overflow-hidden bg-white font-[Roboto,'Noto_Sans_CJK_SC',sans-serif]">
      <Header />
      <Quote />
      <div className="h-[12px] bg-[#f4f4f4]" />
      <Tabs />
      <AverageRow />
      <CandleChart />
      <VolumePanel />
      <RsiPanel />
      <KdjPanel />
      <div className="h-[13px] bg-linear-to-b from-[#f8f8f8] to-[#dfdfdf]" />
      <IntradaySheet />
    </main>
  );
}
